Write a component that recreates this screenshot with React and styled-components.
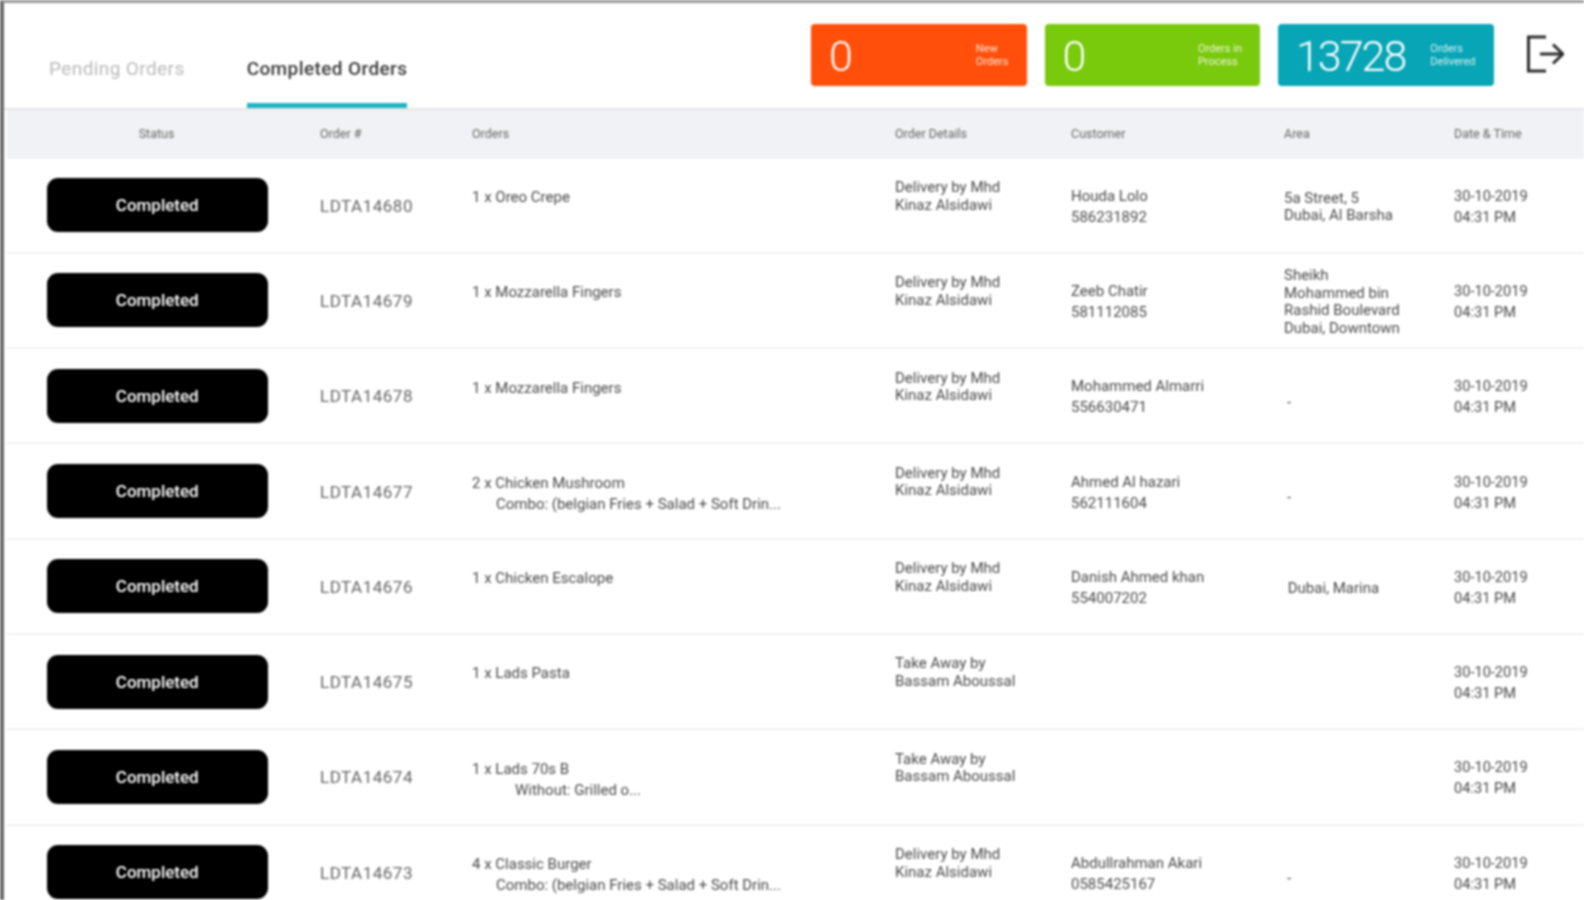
import React from 'react'
import styled, { createGlobalStyle } from 'styled-components'

const GlobalStyle = createGlobalStyle`
  html, body {
    margin: 0;
    padding: 0;
    background: #fff;
    overflow: hidden;
  }
  body {
    font-family: Roboto, 'Liberation Sans', sans-serif;
  }
`

const COLUMNS = '313px 152px 423px 176px 213px 170px 1fr'

const orders = [
  { id: 'LDTA14680', item: '1 x Oreo Crepe', by: 'Delivery by Mhd', driver: 'Kinaz Alsidawi', name: 'Houda Lolo', phone: '586231892', area: ['5a Street, 5', 'Dubai, Al Barsha'] },
  { id: 'LDTA14679', item: '1 x Mozzarella Fingers', by: 'Delivery by Mhd', driver: 'Kinaz Alsidawi', name: 'Zeeb Chatir', phone: '581112085', area: ['Sheikh', 'Mohammed bin', 'Rashid Boulevard', 'Dubai, Downtown'] },
  { id: 'LDTA14678', item: '1 x Mozzarella Fingers', by: 'Delivery by Mhd', driver: 'Kinaz Alsidawi', name: 'Mohammed Almarri', phone: '556630471', dash: true },
  { id: 'LDTA14677', item: '2 x Chicken Mushroom', note: 'Combo: (belgian Fries + Salad + Soft Drin...', by: 'Delivery by Mhd', driver: 'Kinaz Alsidawi', name: 'Ahmed Al hazari', phone: '562111604', dash: true },
  { id: 'LDTA14676', item: '1 x Chicken Escalope', by: 'Delivery by Mhd', driver: 'Kinaz Alsidawi', name: 'Danish Ahmed khan', phone: '554007202', area: ['\u00a0Dubai, Marina'] },
  { id: 'LDTA14675', item: '1 x Lads Pasta', by: 'Take Away by', driver: 'Bassam Aboussal' },
  { id: 'LDTA14674', item: '1 x Lads 70s B', note: 'Without: Grilled o...', deep: true, by: 'Take Away by', driver: 'Bassam Aboussal' },
  { id: 'LDTA14673', item: '4 x Classic Burger', note: 'Combo: (belgian Fries + Salad + Soft Drin...', by: 'Delivery by Mhd', driver: 'Kinaz Alsidawi', name: 'Abdullrahman Akari', phone: '0585425167', dash: true },
]

const stats = [
  { value: '0', label: ['New', 'Orders'], color: '#ff4f0a' },
  { value: '0', label: ['Orders in', 'Process'], color: '#79c90c' },
  { value: '13728', label: ['Orders', 'Delivered'], color: '#07a5b5' },
]

const App = () => {
  return (
    <Page>
      <GlobalStyle />
      <TopBar>
        <Tabs>
          <Tab>Pending Orders</Tab>
          <Tab $active>Completed Orders</Tab>
        </Tabs>
        <Stats>
          {stats.map((s) => (
            <StatCard key={s.label[0]} $color={s.color}>
              <StatValue>{s.value}</StatValue>
              <StatLabel>
                {s.label[0]}
                <br />
                {s.label[1]}
              </StatLabel>
            </StatCard>
          ))}
        </Stats>
        <LogoutIcon viewBox="0 0 38 38" fill="none" stroke="#2b2b2b" strokeWidth="3">
          <path d="M20 2H2.5v34H20" />
          <path d="M14 19h22" />
          <path d="M27 9.5l10 9.5-10 9.5" />
        </LogoutIcon>
      </TopBar>
      <TableHead>
        <HeadCell $center>Status</HeadCell>
        <HeadCell>Order #</HeadCell>
        <HeadCell>Orders</HeadCell>
        <HeadCell>Order Details</HeadCell>
        <HeadCell>Customer</HeadCell>
        <HeadCell>Area</HeadCell>
        <HeadCell>Date &amp; Time</HeadCell>
      </TableHead>
      {orders.map((o) => (
        <Row key={o.id}>
          <StatusCell>
            <StatusButton>Completed</StatusButton>
          </StatusCell>
          <OrderId>{o.id}</OrderId>
          <ItemCell>
            <div>{o.item}</div>
            {o.note && <ItemNote $deep={o.deep}>{o.note}</ItemNote>}
          </ItemCell>
          <DetailsCell>
            {o.by}
            <br />
            {o.driver}
          </DetailsCell>
          <PairCell>
            {o.name && (
              <>
                {o.name}
                <br />
                {o.phone}
              </>
            )}
          </PairCell>
          <AreaCell>
            {o.area && o.area.map((line) => <div key={line}>{line}</div>)}
            {o.dash && <Dash>-</Dash>}
          </AreaCell>
          <DateCell>
            30-10-2019
            <br />
            04:31 PM
          </DateCell>
        </Row>
      ))}
    </Page>
  )
}

const Page = styled.div`
  width: 1584px;
  height: 900px;
  box-sizing: border-box;
  overflow: hidden;
  border-top: 3px solid #9a9a9a;
  border-left: 4px solid #6a6a6a;
  background: #fff;
  color: #4a4a4a;
  filter: blur(0.9px);
`

const TopBar = styled.div`
  display: flex;
  align-items: flex-start;
  height: 107px;
  box-sizing: border-box;
  padding-left: 45px;
  border-bottom: 2px solid #e6e6e6;
`

const Tabs = styled.div`
  display: flex;
  gap: 62px;
  padding-top: 54px;
  width: 762px;
`

const Tab = styled.div`
  height: 51px;
  box-sizing: border-box;
  font-size: 19px;
  line-height: 23px;
  letter-spacing: 0.4px;
  font-weight: ${(p) => (p.$active ? 500 : 400)};
  color: ${(p) => (p.$active ? '#3a3a3a' : '#b9b9b9')};
  border-bottom: ${(p) => (p.$active ? '5px solid #1db4bf' : '5px solid transparent')};
`

const Stats = styled.div`
  display: flex;
  gap: 18px;
  padding-top: 21px;
`

const StatCard = styled.div`
  width: 215.5px;
  height: 62px;
  box-sizing: border-box;
  padding: 0 18px;
  border-radius: 4px;
  background: ${(p) => p.$color};
  color: #fff;
  display: flex;
  align-items: center;
  justify-content: space-between;
`

const StatValue = styled.div`
  font-size: 43px;
  font-weight: 300;
  letter-spacing: -2px;
  padding-top: 2px;
`

const StatLabel = styled.div`
  font-size: 11px;
  line-height: 13.5px;
  opacity: 0.85;
`

const LogoutIcon = styled.svg`
  width: 38px;
  height: 38px;
  margin: 32px 0 0 32.5px;
`

const TableHead = styled.div`
  display: grid;
  grid-template-columns: ${COLUMNS};
  align-items: center;
  height: 48.5px;
  box-sizing: border-box;
  padding-bottom: 2px;
  margin-left: 3px;
  background: #f1f2f5;
  font-size: 12.5px;
  color: #666;
`

const HeadCell = styled.div`
  ${(p) => p.$center && 'text-align: center; padding-right: 14px;'}
`

const Row = styled.div`
  display: grid;
  grid-template-columns: ${COLUMNS};
  height: 95.3px;
  box-sizing: border-box;
  margin-left: 3px;
  border-bottom: 2px solid #f2f2f2;
  font-size: 15px;
`

const StatusCell = styled.div`
  display: flex;
  align-items: center;
  padding-left: 39.5px;
`

const StatusButton = styled.div`
  width: 221.5px;
  height: 54px;
  border-radius: 11px;
  background: #000;
  color: #fff;
  font-size: 17px;
  font-weight: 500;
  display: flex;
  align-items: center;
  justify-content: center;
`

const OrderId = styled.div`
  display: flex;
  align-items: center;
  padding-top: 1px;
  font-size: 17px;
  letter-spacing: 0.5px;
  color: #666;
`

const ItemCell = styled.div`
  padding-top: 28.5px;
  line-height: 21px;
`

const ItemNote = styled.div`
  padding-left: ${(p) => (p.$deep ? '43px' : '24px')};
`

const DetailsCell = styled.div`
  padding-top: 20.5px;
  line-height: 17.5px;
`

const PairCell = styled.div`
  align-self: center;
  padding-top: 3px;
  line-height: 21px;
`

const DateCell = styled(PairCell)`
  font-size: 14.6px;
`

const AreaCell = styled.div`
  align-self: center;
  padding-top: 4px;
  line-height: 17.5px;
`

const Dash = styled.div`
  padding: 10px 0 0 3px;
`

export default App
